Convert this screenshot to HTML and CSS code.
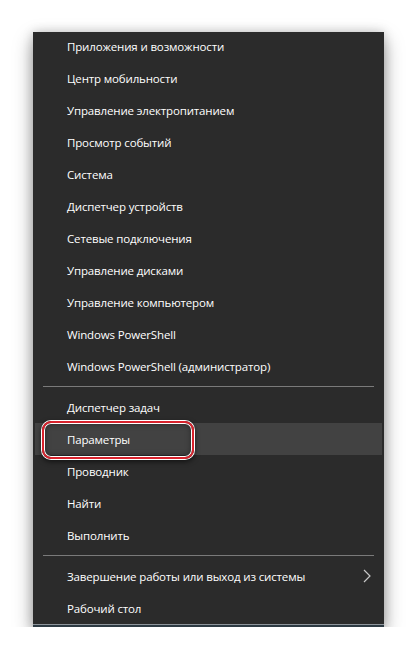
FILE: index.html
```html
<!DOCTYPE html>
<html lang="ru">
<head>
<meta charset="utf-8">
<link rel="stylesheet" href="styles.css">
</head>
<body>
<div class="menu">
  <div class="group">
    <div class="item">Приложения и возможности</div>
    <div class="item">Центр мобильности</div>
    <div class="item">Управление электропитанием</div>
    <div class="item">Просмотр событий</div>
    <div class="item">Система</div>
    <div class="item">Диспетчер устройств</div>
    <div class="item">Сетевые подключения</div>
    <div class="item">Управление дисками</div>
    <div class="item">Управление компьютером</div>
    <div class="item">Windows PowerShell</div>
    <div class="item">Windows PowerShell (администратор)</div>
  </div>
  <div class="sep"></div>
  <div class="group">
    <div class="item">Диспетчер задач</div>
    <div class="item selected">Параметры<span class="mark"></span></div>
    <div class="item">Проводник</div>
    <div class="item">Найти</div>
    <div class="item">Выполнить</div>
  </div>
  <div class="sep"></div>
  <div class="group">
    <div class="item sub">Завершение работы или выход из системы
      <svg class="chev" width="8" height="14" viewBox="0 0 8 14"><polyline points="1,1 7,7 1,13" fill="none" stroke="#c8c8c8" stroke-width="1.2"/></svg>
    </div>
    <div class="item">Рабочий стол</div>
  </div>
  <div class="foot"></div>
</div>
</body>
</html>
```
FILE: styles.css
```css
html, body {
  margin: 0;
  padding: 0;
  background: #ffffff;
}
body {
  padding: 32px 0 0 33px;
  font-family: "Open Sans", "Noto Sans", sans-serif;
}
.menu {
  width: 351px;
  background: #2b2b2b;
  box-shadow: 0 8px 18px rgba(0, 0, 0, 0.38), 0 0 10px rgba(0, 0, 0, 0.18);
  display: flex;
  flex-direction: column;
}
.group {
  display: flex;
  flex-direction: column;
}
.group:first-child {
  margin-top: -2px;
}
.item {
  position: relative;
  height: 32px;
  display: flex;
  align-items: center;
  padding-left: 32px;
  margin: 0 2px;
  font-size: 11.5px;
  color: #ffffff;
  letter-spacing: -0.15px;
}
.item.selected {
  background: #424242;
}
.mark {
  position: absolute;
  left: 7px;
  top: -2px;
  width: 148px;
  height: 34px;
  border: 2px solid #d9232d;
  border-radius: 9px;
  box-shadow: 0 0 0 1px #ffffff, inset 0 0 0 1px #ffffff, 0 2px 5px 1px rgba(0, 0, 0, 0.55), inset 0 0 6px rgba(0, 0, 0, 0.5);
}
.sub {
  justify-content: space-between;
  padding-right: 11px;
}
.sep {
  height: 1px;
  background: #7a7a7a;
  margin: 4px 10px;
}
.group:last-of-type {
  padding-bottom: 8px;
}
.foot {
  height: 2px;
  border-top: 1px solid #8e959b;
  background: #2d3a43;
}
```
